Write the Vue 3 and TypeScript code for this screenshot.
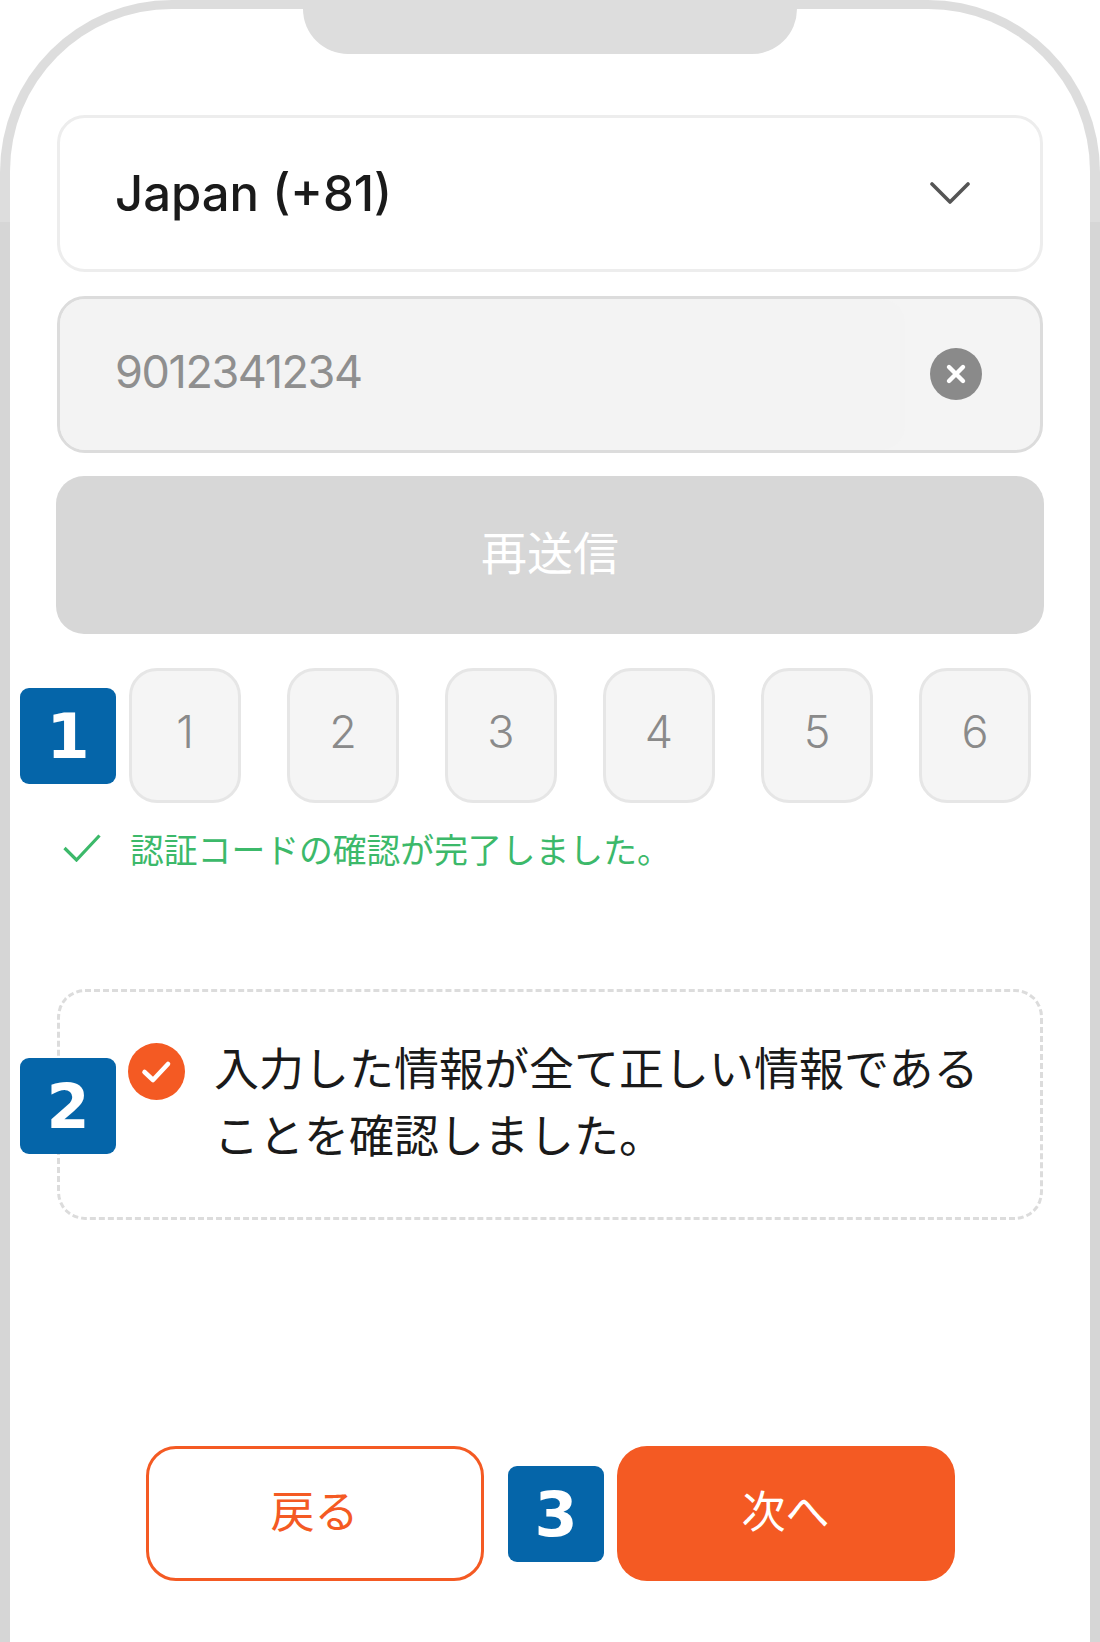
<template>
  <div class="phone">
    <div class="screen">
      <div class="notch"></div>

      <div class="field select">
        <span class="select-label">Japan (+81)</span>
        <svg class="chevron" width="40" height="24" viewBox="0 0 40 24" fill="none">
          <path d="M2 3 L20 21 L38 3" stroke="#555" stroke-width="3.6" stroke-linecap="round" stroke-linejoin="round" />
        </svg>
      </div>

      <div class="field phone-input">
        <div class="phone-value">9012341234</div>
        <div class="clear">
          <svg width="52" height="52" viewBox="0 0 52 52">
            <circle cx="26" cy="26" r="26" fill="#8a8a8a" />
            <path d="M19 19 L33 33 M33 19 L19 33" stroke="#fff" stroke-width="4.4" stroke-linecap="round" />
          </svg>
        </div>
      </div>

      <button class="resend" type="button">再送信</button>

      <div class="code-row">
        <span class="badge badge-one">1</span>
        <div v-for="digit in digits" :key="digit" class="code-box">{{ digit }}</div>
      </div>

      <div class="verified">
        <svg width="38" height="28" viewBox="0 0 38 28" fill="none">
          <path d="M1.5 14 L13.5 26 L36.5 1.5" stroke="#3cb96a" stroke-width="3.2" />
        </svg>
        <span>認証コードの確認が完了しました。</span>
      </div>

      <div class="confirm">
        <span class="badge badge-two">2</span>
        <svg class="confirm-check" width="57" height="57" viewBox="0 0 57 57" fill="none">
          <circle cx="28.5" cy="28.5" r="28.5" fill="#f45a23" />
          <path d="M16.5 29 L25 37 L40 21" stroke="#fff" stroke-width="4.6" stroke-linecap="round" stroke-linejoin="round" />
        </svg>
        <p class="confirm-text">入力した情報が全て正しい情報であることを確認しました。</p>
      </div>

      <div class="actions">
        <button class="action back" type="button">戻る</button>
        <span class="badge badge-three">3</span>
        <button class="action next" type="button">次へ</button>
      </div>
    </div>
  </div>
</template>

<script setup lang="ts">
const digits: number[] = [1, 2, 3, 4, 5, 6]
</script>

<style>
html,
body {
  margin: 0;
  background: #fff;
}
</style>

<style scoped>
.phone {
  width: 1100px;
  height: 1642px;
  box-sizing: border-box;
  padding: 9px 10px 0;
  border-radius: 172px 172px 0 0;
  background: linear-gradient(#dddddd 222px, #d6d6d6 222px);
  font-family: "Noto Sans CJK JP", sans-serif;
}

.screen {
  height: 100%;
  box-sizing: border-box;
  padding: 0 47px 61px;
  border-radius: 162px 162px 0 0;
  background: #fff;
  display: flex;
  flex-direction: column;
}

.notch {
  width: 494px;
  height: 45px;
  margin: 0 auto 61px;
  flex: none;
  background: #dddddd;
  border-radius: 0 0 46px 46px;
}

.field {
  height: 157px;
  flex: none;
  box-sizing: border-box;
  border-radius: 28px;
  display: flex;
  align-items: center;
}

.select {
  padding: 0 70px 0 55px;
  border: 3px solid #ededed;
  justify-content: space-between;
  background: #fff;
}

.select-label {
  font-family: Inter, sans-serif;
  font-size: 49px;
  font-weight: 500;
  color: #1a1a1a;
}

.chevron {
  margin-top: -1px;
}

.phone-input {
  margin-top: 24px;
  border: 3px solid #dcdcdc;
  background: #f4f4f4;
  overflow: hidden;
}

.phone-value {
  width: 845px;
  height: 100%;
  box-sizing: border-box;
  padding: 0 0 6px 55px;
  display: flex;
  align-items: center;
  background: #f3f3f3;
  border-radius: 0 24px 24px 0;
  font-family: Inter, sans-serif;
  font-size: 45px;
  letter-spacing: -1.4px;
  color: #8f8f8f;
}

.clear {
  margin-left: 25px;
  width: 52px;
  height: 52px;
  margin-top: -1px;
}

.resend {
  height: 158px;
  flex: none;
  margin: 23px -1px 0;
  border: none;
  border-radius: 28px;
  background: #d7d7d7;
  color: #fff;
  font-family: inherit;
  font-size: 46px;
  padding: 0 0 10px;
}

.code-row {
  position: relative;
  margin-top: 34px;
  padding-left: 72px;
  display: flex;
  gap: 46px;
}

.code-box {
  width: 112px;
  height: 135px;
  box-sizing: border-box;
  padding-bottom: 8px;
  border: 3px solid #e6e6e6;
  border-radius: 28px;
  background: #f5f5f5;
  display: flex;
  align-items: center;
  justify-content: center;
  font-family: Inter, sans-serif;
  font-weight: 300;
  font-size: 45px;
  color: #8a8a8a;
}

.badge {
  position: absolute;
  width: 96px;
  height: 96px;
  box-sizing: border-box;
  padding-top: 2px;
  border-radius: 9px;
  background: #0565a9;
  color: #fff;
  display: flex;
  align-items: center;
  justify-content: center;
  font-family: "DejaVu Sans", sans-serif;
  font-weight: 700;
  font-size: 62px;
  line-height: 1;
}

.badge-one {
  left: -37px;
  top: 20px;
}

.badge-two {
  left: -40px;
  top: 66px;
}

.badge-three {
  left: 451px;
  top: 20px;
}

.verified {
  margin-top: 20px;
  padding-left: 6px;
  height: 50px;
  display: flex;
  align-items: center;
  gap: 29px;
  font-size: 33.8px;
  color: #3cb96a;
  flex: none;
}

.confirm {
  position: relative;
  margin-top: 116px;
  height: 231px;
  flex: none;
  box-sizing: border-box;
  padding: 51px 50px 0 68px;
  border: 3px dashed #dcdcdc;
  border-radius: 28px;
  display: flex;
  align-items: flex-start;
  gap: 29px;
}

.confirm-check {
  flex: none;
}

.confirm-text {
  margin: -10px 0 0;
  font-size: 45px;
  line-height: 67px;
  color: #1a1a1a;
}

.actions {
  position: relative;
  margin-top: auto;
  display: flex;
  justify-content: center;
  gap: 133px;
  flex: none;
}

.action {
  width: 338px;
  height: 135px;
  box-sizing: border-box;
  border-radius: 30px;
  font-family: inherit;
  font-size: 44px;
  padding: 0 0 10px;
}

.back {
  border: 3px solid #f45a23;
  background: #fff;
  color: #f45a23;
}

.next {
  border: none;
  background: #f45a23;
  color: #fff;
}
</style>
